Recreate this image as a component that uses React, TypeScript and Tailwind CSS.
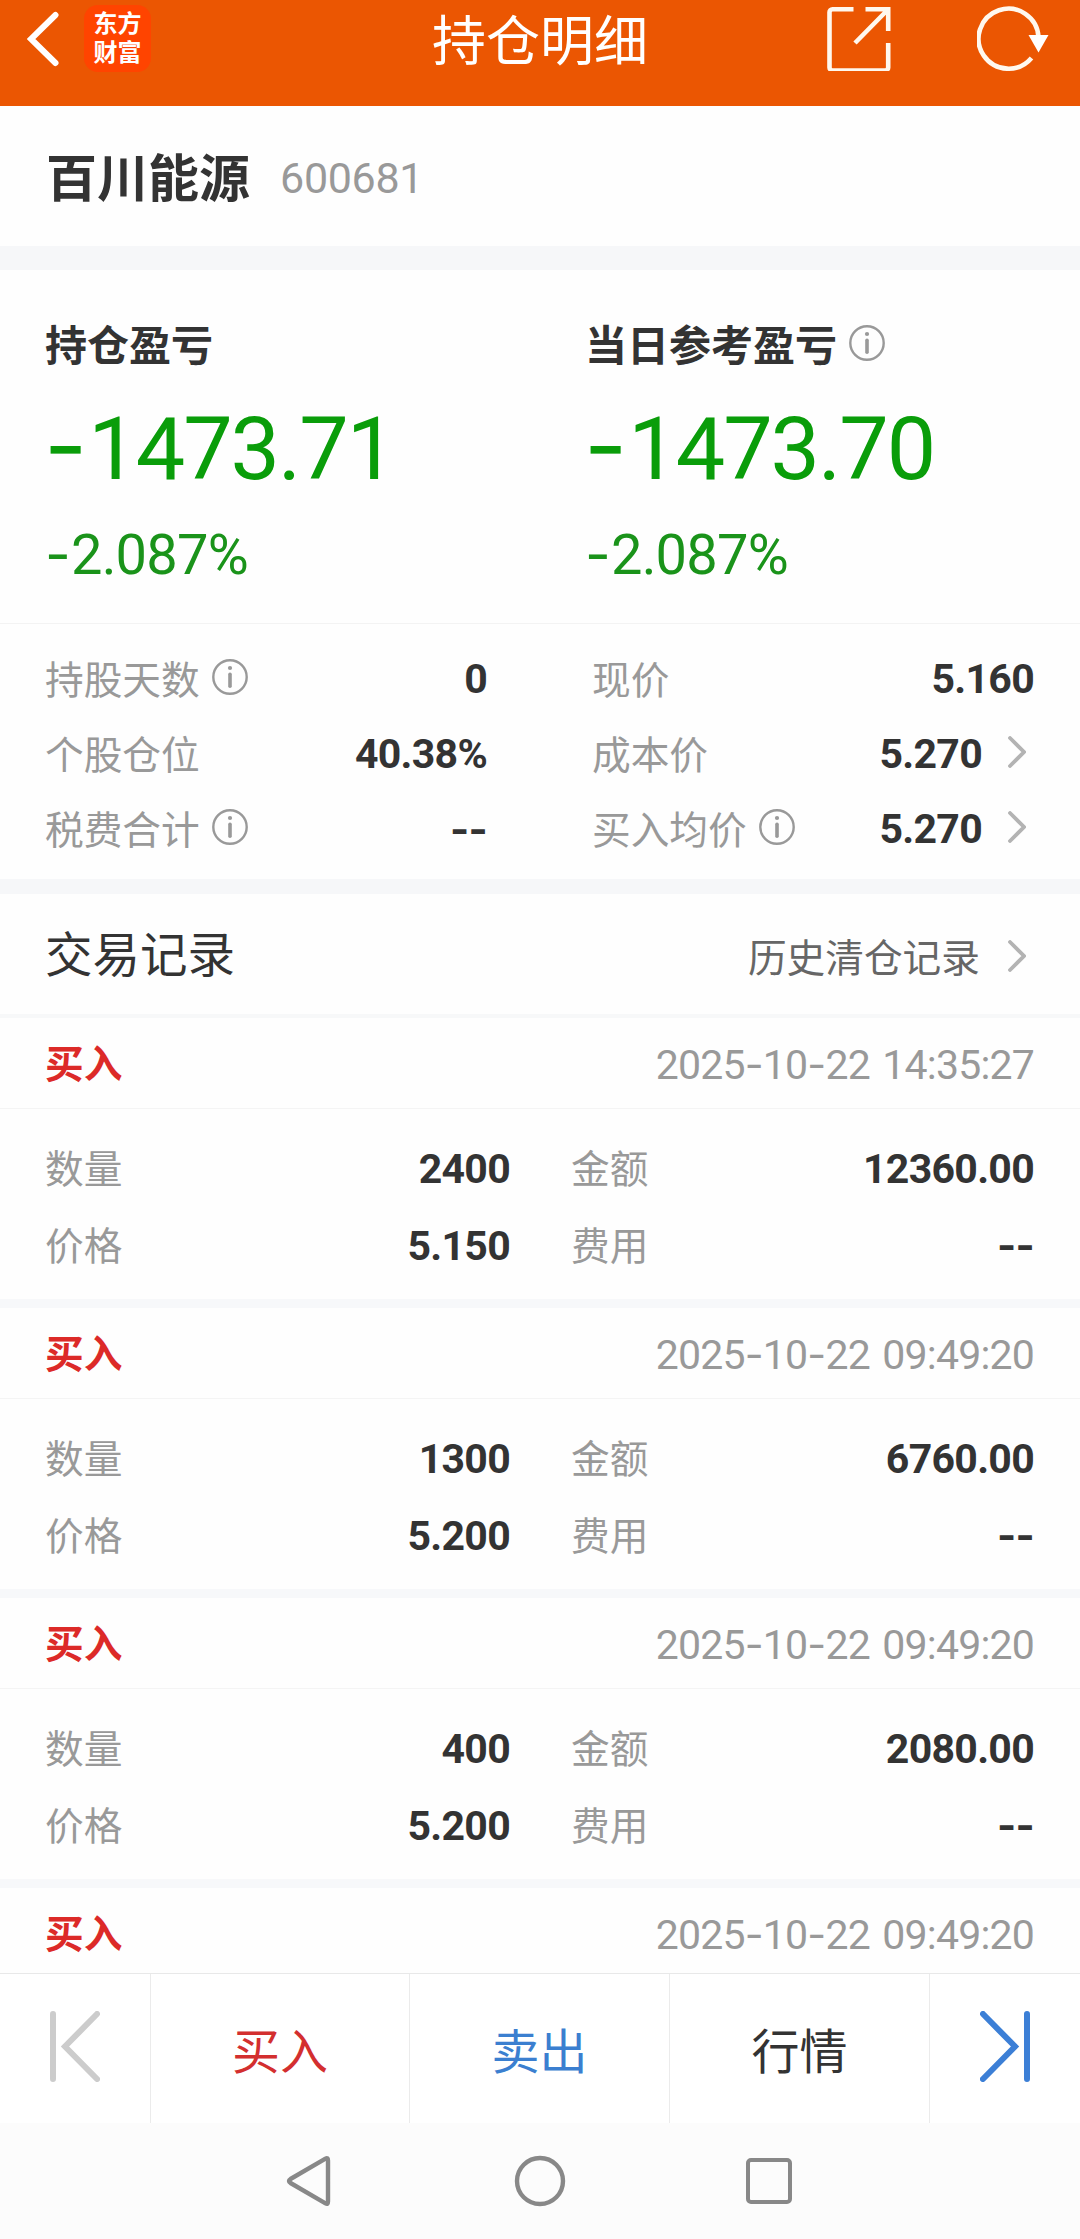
import { Fragment } from 'react';

interface TradeRecord {
  side: string;
  time: string;
  quantity: string;
  amount: string;
  price: string;
  fee: string;
}

const records: TradeRecord[] = [
  { side: '买入', time: '2025-10-22 14:35:27', quantity: '2400', amount: '12360.00', price: '5.150', fee: '--' },
  { side: '买入', time: '2025-10-22 09:49:20', quantity: '1300', amount: '6760.00', price: '5.200', fee: '--' },
  { side: '买入', time: '2025-10-22 09:49:20', quantity: '400', amount: '2080.00', price: '5.200', fee: '--' },
  { side: '买入', time: '2025-10-22 09:49:20', quantity: '', amount: '', price: '', fee: '' },
];

const holdings = [
  { label: '持股天数', value: '0', info: true },
  { label: '个股仓位', value: '40.38%' },
  { label: '税费合计', value: '--', info: true },
];

const prices = [
  { label: '现价', value: '5.160' },
  { label: '成本价', value: '5.270', link: true },
  { label: '买入均价', value: '5.270', info: true, link: true },
];

// Roboto's hyphen is very short, so hyphens are set in Inter
function Num({ children, hyphen = '' }: { children: string; hyphen?: string }) {
  return (
    <>
      {children.split('-').map((part, i) => (
        <Fragment key={i}>
          {i > 0 && <span className={`font-['Inter'] ${hyphen}`}>-</span>}
          {part}
        </Fragment>
      ))}
    </>
  );
}

function InfoIcon({ className = '' }: { className?: string }) {
  return (
    <svg className={`w-9 h-9 shrink-0 ${className}`} viewBox="0 0 36 36" fill="none" stroke="#999" strokeWidth="2.4">
      <circle cx="18" cy="18" r="16.7" />
      <path d="M18 15.2v12" strokeWidth="3.6" strokeLinecap="round" />
      <circle cx="18" cy="9" r="2.1" fill="#999" stroke="none" />
    </svg>
  );
}

function Chevron() {
  return (
    <svg className="w-[18px] h-8 shrink-0 -mt-1" viewBox="0 0 18 32" fill="none" stroke="#b3b3b3" strokeWidth="3.8" strokeLinecap="round">
      <path d="M2 2l14 14L2 30" />
    </svg>
  );
}

function Header() {
  return (
    <header className="h-[106px] shrink-0 bg-[#eb5602] text-white grid grid-cols-[1fr_auto_1fr] items-start">
      <div className="flex items-start pl-[27px] pt-[5px]">
        <svg className="w-8 h-14 mt-1.5" viewBox="0 0 32 56" fill="none" stroke="#fff" strokeWidth="6" strokeLinecap="round">
          <path d="M28.500 4L4 28l24.500 24" />
        </svg>
        <div className="ml-[25px] w-[67px] h-[67px] rounded-[14px] bg-[#ff4400] flex flex-col items-center justify-center text-[24px] leading-[29px] font-bold">
          <span>东方</span>
          <span>财富</span>
        </div>
      </div>
      <h1 className="pt-1 text-[54px] leading-[78px]">持仓明细</h1>
      <div className="flex justify-end pt-[5px] pr-[30px] gap-[86px]">
        <svg className="w-16 h-[66px]" viewBox="0 0 64 66" fill="none" stroke="#fff8ee" strokeWidth="4.600">
          <path d="M26.500 4.300H5.500a3 3 0 0 0-3 3v55.200a3 3 0 0 0 3 3h52.700a3 3 0 0 0 3-3V38" />
          <path d="M38.500 4.300h22.700V26M60 5.500L28 38" />
        </svg>
        <svg className="w-[73px] h-[66px]" viewBox="0 0 73 66" fill="none" stroke="#fff8ee" strokeWidth="4.600">
          <path d="M61.500 32A30 30 0 1 0 54.500 53" />
          <path d="M51.500 30h20L61.500 47.500z" fill="#fff" stroke="none" />
        </svg>
      </div>
    </header>
  );
}

function ProfitBlock({ title, value, percent, info }: { title: string; value: string; percent: string; info?: boolean }) {
  return (
    <div className="pl-[45px] pt-[44px]">
      <div className="flex items-center h-[60px] text-[42px] leading-[60px] font-bold text-[#333]">
        <span className="mt-[6px]">{title}</span>
        {info && <InfoIcon className="ml-[12px] -mt-0.5" />}
      </div>
      <div className="mt-[24px] -ml-px h-[100px] leading-[100px] text-[88px] tracking-[-2px] text-[#0a9d0a]">
        <Num hyphen="text-[94px] leading-none mr-[3px]">{value}</Num>
      </div>
      <div className="mt-[21px] h-[70px] leading-[70px] text-[56px] tracking-[-0.8px] text-[#1a931a]">
        <Num hyphen="mr-px">{percent}</Num>
      </div>
    </div>
  );
}

function StatRow({ label, value, info, link }: { label: string; value: string; info?: boolean; link?: boolean }) {
  return (
    <div className="flex items-center h-[75px] leading-[75px]">
      <span className="mt-[3px] text-[38.7px] text-[#999]">{label}</span>
      {info && <InfoIcon className="ml-[12px] -mt-1" />}
      <span className="mt-[2px] ml-auto text-[41px] tracking-[-0.7px] font-bold text-[#333]"><Num>{value}</Num></span>
      {link && <span className="flex pl-[26px] pr-[8px]"><Chevron /></span>}
    </div>
  );
}

function Field({ label, value }: { label: string; value: string }) {
  return (
    <div className="flex items-center justify-between h-[77px] leading-[77px]">
      <span className="mt-[3px] text-[38.7px] text-[#999]">{label}</span>
      <span className="mt-[3px] text-[41px] tracking-[-0.7px] font-bold text-[#333]"><Num>{value}</Num></span>
    </div>
  );
}

function RecordCard({ record }: { record: TradeRecord }) {
  return (
    <div className="h-[290px] shrink-0 border-b-[9px] border-[#f7f8fa]">
      <div className="h-[91px] pt-[5px] pl-[45px] pr-[46px] flex items-center justify-between border-b border-[#f4f4f4]">
        <span className="text-[38.7px] font-bold text-[#dc2a28]">{record.side}</span>
        <span className="text-[41px] tracking-[-0.8px] [word-spacing:3px] text-[#999]"><Num>{record.time}</Num></span>
      </div>
      {record.quantity && (
        <div className="grid grid-cols-[465px_463px] gap-x-[61px] pl-[45px] pt-[20px]">
          <Field label="数量" value={record.quantity} />
          <Field label="金额" value={record.amount} />
          <Field label="价格" value={record.price} />
          <Field label="费用" value={record.fee} />
        </div>
      )}
    </div>
  );
}

function ActionBar() {
  return (
    <div className="h-[150px] shrink-0 bg-white border-t border-[#e8e8e8] grid grid-cols-[151px_259px_260px_260px_150px] text-[48px] text-[#333]">
      <div className="flex justify-center pt-[37px] border-r border-[#ebebeb]">
        <svg className="w-[50px] h-[71px]" viewBox="0 0 50 71" fill="none" stroke="#ccc" strokeWidth="6" strokeLinecap="round">
          <path d="M3 3v65M47 3L15 35.500L47 68" />
        </svg>
      </div>
      <div className="flex items-center justify-center pt-2 border-r border-[#ebebeb] text-[#d32f2f]">买入</div>
      <div className="flex items-center justify-center pt-2 border-r border-[#ebebeb] text-[#3b7fd0]">卖出</div>
      <div className="flex items-center justify-center pt-2 border-r border-[#ebebeb]">行情</div>
      <div className="flex justify-center pt-[37px]">
        <svg className="w-[50px] h-[71px]" viewBox="0 0 50 71" fill="none" stroke="#3c7fd6" strokeWidth="6" strokeLinecap="round">
          <path d="M47 3v65M3 3l32 32.500L3 68" />
        </svg>
      </div>
    </div>
  );
}

function SystemNav() {
  return (
    <nav className="h-[116px] shrink-0 bg-[#fcfcfc] flex items-center pl-[286px]">
      <svg className="w-[46px] h-[52px]" viewBox="0 0 46 52" fill="none" stroke="#888" strokeWidth="4.400" strokeLinejoin="round">
        <path d="M39.500 3.600Q42 2.200 42 5.500V46.500Q42 49.800 39.500 48.400L4.500 28Q1.500 26 4.500 24z" />
      </svg>
      <svg className="w-[52px] h-[52px] ml-[182px]" viewBox="0 0 52 52" fill="none" stroke="#888" strokeWidth="4.400">
        <circle cx="26" cy="26" r="23" />
      </svg>
      <div className="w-[46px] h-[46px] ml-[180px] rounded-[5px] border-[4.500px] border-[#888]" />
    </nav>
  );
}

export default function App() {
  return (
    <div className="w-[1080px] h-[2239px] overflow-hidden flex flex-col bg-[#fefefe] font-['Roboto','Noto_Sans_CJK_SC',sans-serif]">
      <Header />

      <section className="h-[140px] shrink-0 flex items-center pl-[46px]">
        <h2 className="mt-[7px] text-[51px] font-bold text-[#333] leading-[76px]">百川能源</h2>
        <span className="mt-[4px] ml-[30px] text-[43px] leading-[76px] tracking-[-0.3px] text-[#999]">600681</span>
      </section>
      <div className="h-6 shrink-0 bg-[#f6f7f9]" />

      <section className="h-[354px] shrink-0 grid grid-cols-2 border-b border-[#f3f3f3]">
        <ProfitBlock title="持仓盈亏" value="-1473.71" percent="-2.087%" />
        <ProfitBlock title="当日参考盈亏" value="-1473.70" percent="-2.087%" info />
      </section>

      <section className="h-[255px] shrink-0 grid grid-cols-[442px_442px] gap-x-[105px] pl-[45px] pt-[17px]">
        <div>{holdings.map((row) => <StatRow key={row.label} {...row} />)}</div>
        <div>{prices.map((row) => <StatRow key={row.label} {...row} />)}</div>
      </section>
      <div className="h-[15px] shrink-0 bg-[#f6f7f9]" />

      <section className="h-[124px] pt-[4px] shrink-0 flex items-center justify-between pl-[45px] pr-[54px] border-b-4 border-[#f7f8f9]">
        <h2 className="text-[47.500px] leading-[70px] text-[#333]">交易记录</h2>
        <div className="flex items-center gap-[28px] pt-1 text-[38.7px] text-[#666]">
          <span className="mt-[2px]">历史清仓记录</span>
          <Chevron />
        </div>
      </section>

      <section className="flex-1 min-h-0 overflow-hidden flex flex-col">
        {records.map((record, i) => <RecordCard key={i} record={record} />)}
      </section>

      <ActionBar />
      <SystemNav />
    </div>
  );
}
